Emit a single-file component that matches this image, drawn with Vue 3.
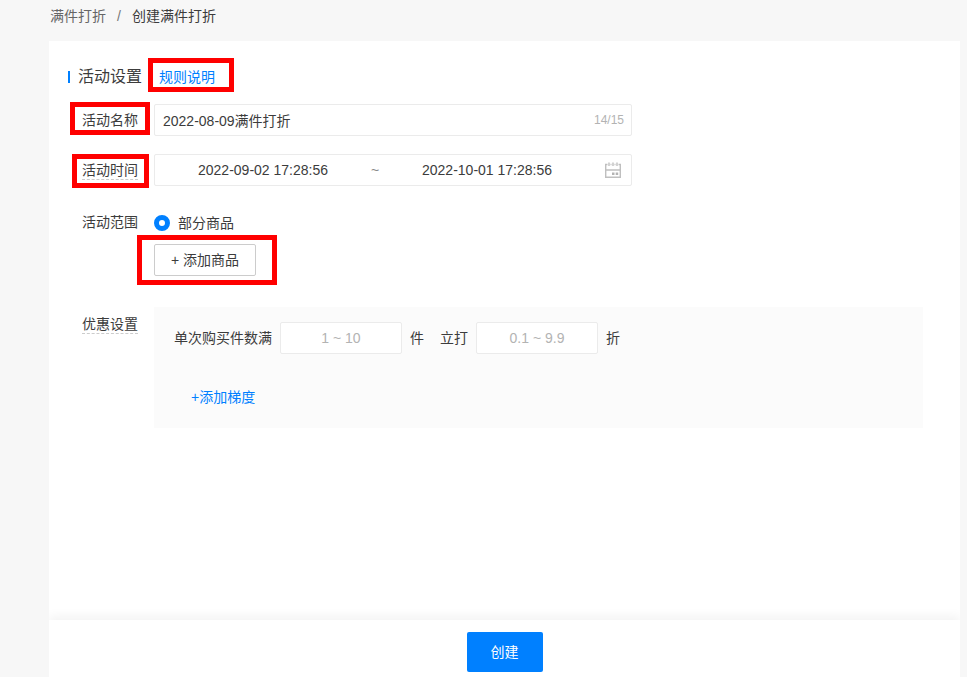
<script setup>
import { ref, computed } from 'vue'

const name = ref('2022-08-09满件打折')
const start = ref('2022-09-02 17:28:56')
const end = ref('2022-10-01 17:28:56')
const scope = ref('part')
const count = ref('')
const discount = ref('')
const counter = computed(() => `${name.value.length}/15`)
</script>

<template>
  <div class="page">
    <nav class="crumbs">
      <a href="#" class="crumb">满件打折</a>
      <span class="slash">/</span>
      <span class="current">创建满件打折</span>
    </nav>

    <form class="card" @submit.prevent>
      <div class="content">
        <header class="heading">
          <span class="bar"></span>
          <h1>活动设置</h1>
          <a href="#" class="rules marked mark-rules">规则说明</a>
        </header>

        <div class="row">
          <label class="label marked mark-name" for="name">活动名称</label>
          <div class="field">
            <input id="name" v-model="name" class="bare name" type="text" maxlength="15">
            <span class="counter">{{ counter }}</span>
          </div>
        </div>

        <div class="row">
          <label class="label marked mark-time" for="start"><span class="hint">活动时间</span></label>
          <div class="field range">
            <input id="start" v-model="start" class="bare date" type="text">
            <span class="tilde">~</span>
            <input v-model="end" class="bare date" type="text" aria-label="结束时间">
            <svg class="calendar" viewBox="0 0 16 16" aria-hidden="true">
              <path d="M2.500 2.500H.7v12.700h14.600V2.500h-1.800M5.500 2.500h1M9.500 2.500h1M.7 8h14.600" />
              <path d="M4 .5v3.500M8 .5v3.500M12 .5v3.500" />
              <path class="dots" d="M7 10.500h2.500v2.500H7zM10.700 10.500h2.500v2.500h-2.500z" />
            </svg>
          </div>
        </div>

        <div class="row scope-row">
          <span id="scope" class="label">活动范围</span>
          <div class="scope" role="radiogroup" aria-labelledby="scope">
            <label class="radio">
              <input v-model="scope" type="radio" value="part">
              <span>部分商品</span>
            </label>
            <button type="button" class="add marked mark-add">+ 添加商品</button>
          </div>
        </div>

        <div class="row offer-row">
          <span class="label"><span class="hint">优惠设置</span></span>
          <div class="panel">
            <div class="rule">
              <label for="count">单次购买件数满</label>
              <input id="count" v-model="count" class="number" type="text" placeholder="1 ~ 10">
              <span class="unit">件</span>
              <label for="discount">立打</label>
              <input id="discount" v-model="discount" class="number" type="text" placeholder="0.1 ~ 9.9">
              <span>折</span>
            </div>
            <button type="button" class="tier">+添加梯度</button>
          </div>
        </div>
      </div>

      <footer class="footer">
        <button type="submit" class="submit">创建</button>
      </footer>
    </form>
  </div>
</template>

<style>
body {
  background: #f7f7f7;
}
</style>

<style scoped>
.page,
.page * {
  box-sizing: border-box;
}
.page {
  display: flex;
  flex-direction: column;
  min-height: 100vh;
  padding: 0 7px 0 49px;
  color: #3c3c3c;
  font: 14px/20px "Liberation Sans", "Noto Sans CJK SC", sans-serif;
}
input,
button {
  font: inherit;
  color: inherit;
}
a {
  text-decoration: none;
}
.crumbs {
  display: flex;
  height: 41px;
  padding: 6px 1px;
}
.crumb {
  color: #666;
}
.slash {
  width: 26px;
  text-align: center;
  color: #777;
}
.card {
  display: flex;
  flex: 1;
  flex-direction: column;
  background: #fff;
}
.content {
  flex: 1;
  padding: 24px 37px 24px 19px;
}
.heading {
  display: flex;
  align-items: center;
  height: 24px;
  margin-bottom: 15px;
}
.bar {
  width: 2px;
  height: 12px;
  margin-right: 8px;
  background: #0080ff;
}
h1 {
  margin: 0;
  font-size: 16px;
  font-weight: 400;
  line-height: 24px;
}
.rules {
  margin-left: 17px;
  color: #0080ff;
}
.row {
  display: grid;
  grid-template-columns: 72px minmax(0, 1fr);
  align-items: start;
  margin-bottom: 18px;
  padding-left: 14px;
}
.label {
  justify-self: start;
  margin-top: 6px;
}
.hint {
  display: block;
  height: 20px;
  border-bottom: 1px dashed #ccc;
}
.field {
  display: flex;
  align-items: center;
  width: 100%;
  max-width: 478px;
  height: 32px;
  padding: 0 7px 0 8px;
  border: 1px solid #ebebeb;
  border-radius: 2px;
}
.bare {
  flex: 1;
  min-width: 0;
  height: 30px;
  padding: 0;
  border: 0;
  outline: 0;
  background: transparent;
}
.counter {
  font-size: 12px;
  color: #b3b3b3;
}
.range {
  padding-right: 10px;
}
.date {
  text-align: center;
}
.tilde {
  width: 24px;
  text-align: center;
  color: #888;
}
.calendar {
  width: 16px;
  height: 16px;
  margin-left: 18px;
  fill: none;
  stroke: #bfbfbf;
  stroke-width: 1.4;
}
.calendar .dots {
  fill: #b3b3b3;
  stroke: none;
}
.scope-row {
  margin-bottom: 31px;
  padding-top: 3px;
}
.scope {
  display: flex;
  flex-direction: column;
  align-items: flex-start;
  gap: 11px;
  padding-top: 6px;
}
.scope-row .label {
  margin-top: 5px;
}
.radio {
  display: flex;
  align-items: center;
  gap: 8px;
}
.radio input {
  width: 16px;
  height: 16px;
  margin: 0;
  appearance: none;
  border: 1px solid #ccc;
  border-radius: 50%;
  background: #fff;
}
.radio input:checked {
  border: 5px solid #0080ff;
}
.add {
  height: 32px;
  padding: 0 16px;
  border: 1px solid #ccc;
  border-radius: 2px;
  background: #fff;
}
.offer-row {
  margin-bottom: 0;
}
.offer-row .label {
  margin-top: 7px;
}
.panel {
  padding: 15px 20px 21px;
  background: #fbfbfb;
}
.rule {
  display: flex;
  align-items: center;
  gap: 8px;
}
.number {
  width: 122px;
  height: 32px;
  padding: 0 8px;
  border: 1px solid #ebebeb;
  border-radius: 2px;
  outline: 0;
  background: #fff;
  text-align: center;
}
.number::placeholder {
  color: #b3b3b3;
}
.unit {
  margin-right: 8px;
}
.tier {
  margin: 33px 0 0 17px;
  padding: 0;
  border: 0;
  background: none;
  color: #0080ff;
}
.footer {
  display: flex;
  justify-content: center;
  padding: 12px 0 5px;
  background: #fff;
  box-shadow: 0 -4px 10px rgba(0, 0, 0, 0.05);
  clip-path: inset(-20px 0 0 0);
}
.submit {
  width: 76px;
  height: 40px;
  border: 0;
  border-radius: 2px;
  background: #0080ff;
  color: #fff;
}

/* Red frames that call out the controls to fill in */
.marked {
  position: relative;
}
.marked::after {
  content: "";
  position: absolute;
  border: 5px solid #f00;
  pointer-events: none;
}
.mark-rules::after {
  inset: -9px -19px -5px -11px;
}
.mark-name::after {
  inset: -8px -12px -5px;
}
.mark-time::after {
  inset: -6px -11px -8px -10px;
}
.mark-add::after {
  inset: -10px -22px -10px -18px;
}
</style>
